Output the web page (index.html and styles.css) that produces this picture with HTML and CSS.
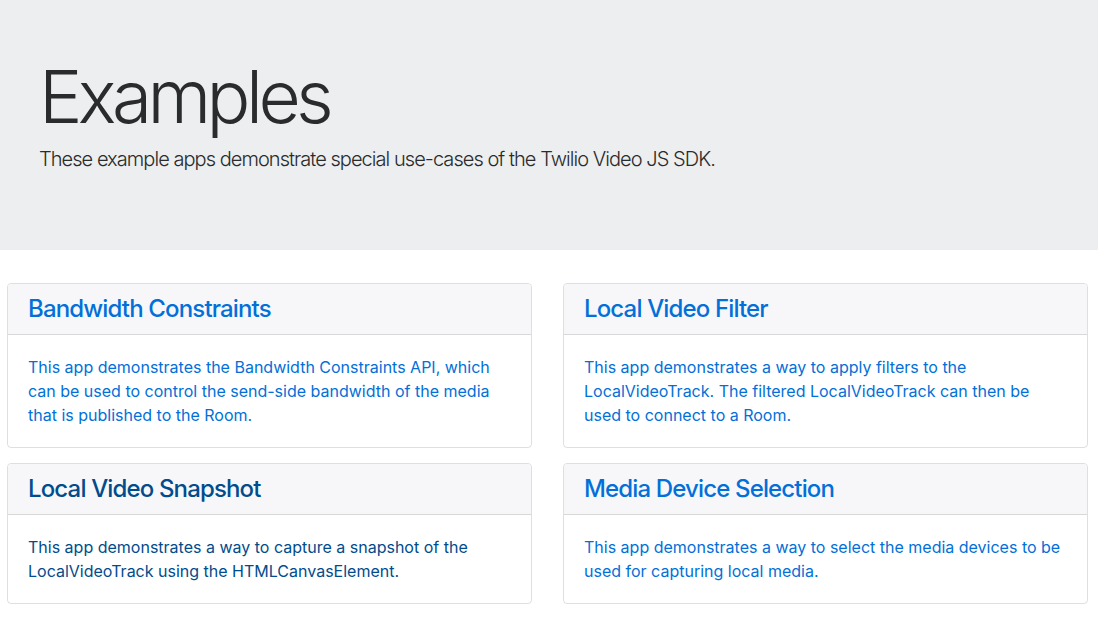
FILE: index.html
```html
<!DOCTYPE html>
<html>
  <head>
    <meta name="viewport" content="width=device-width, initial-scale=1" />
    <link rel="stylesheet" href="styles.css">
  </head>
  <body>
    <div class="jumbotron">
      <h1 class="display">Examples</h1>
      <p class="lead">These example apps demonstrate special use-cases of the Twilio Video JS SDK.</p>
    </div>

    <div class="examples">
      <a href="bandwidthconstraints" class="card">
        <div class="card-header"><h4>Bandwidth Constraints</h4></div>
        <div class="card-block">
          This app demonstrates the Bandwidth Constraints API, which can be used to control the send-side bandwidth of the media that is published to the Room.
        </div>
      </a>
      <a href="localvideofilter" class="card">
        <div class="card-header"><h4>Local Video Filter</h4></div>
        <div class="card-block">
          This app demonstrates a way to apply filters to the LocalVideoTrack. The filtered LocalVideoTrack can then be used to connect to a Room.
        </div>
      </a>
      <a href="localvideosnapshot" class="card visited">
        <div class="card-header"><h4>Local Video Snapshot</h4></div>
        <div class="card-block">
          This app demonstrates a way to capture a snapshot of the LocalVideoTrack using the HTMLCanvasElement.
        </div>
      </a>
      <a href="mediadevices" class="card">
        <div class="card-header"><h4>Media Device Selection</h4></div>
        <div class="card-block">
          This app demonstrates a way to select the media devices to be used for capturing local media.
        </div>
      </a>
    </div>
  </body>
</html>
```

FILE: styles.css
```css
* {
  box-sizing: border-box;
}

body {
  margin: 0;
  font-family: Inter, "Helvetica Neue", Arial, sans-serif;
  font-size: 16px;
  line-height: 1.5;
  color: #292b2c;
  background-color: #fff;
}

.jumbotron {
  background-color: #eceeef;
  height: 250px;
  padding: 56px 40px 0 39px;
  margin-bottom: 33px;
}

.display {
  margin: 0;
  font-size: 73px;
  font-weight: 300;
  line-height: 81px;
  letter-spacing: -4.6px;
}

.lead {
  margin: 7px 0 0 0;
  font-size: 20px;
  font-weight: 300;
  letter-spacing: -0.95px;
}

.examples {
  display: grid;
  grid-template-columns: 1fr 1fr;
  column-gap: 31px;
  row-gap: 15px;
  padding: 0 10px 0 7px;
}

.card {
  display: block;
  border: 1px solid rgba(0, 0, 0, 0.125);
  border-radius: 4px;
  color: #0270d8;
  text-decoration: none;
  overflow: hidden;
}

.card.visited {
  color: #014c8c;
}

.card-header {
  background-color: #f7f7f9;
  border-bottom: 1px solid rgba(0, 0, 0, 0.125);
  padding: 12px 20px;
}

.card-header h4 {
  margin: 0;
  font-size: 24px;
  font-weight: 500;
  line-height: 26px;
  letter-spacing: -0.85px;
}

.card-block {
  padding: 20px;
}
```
